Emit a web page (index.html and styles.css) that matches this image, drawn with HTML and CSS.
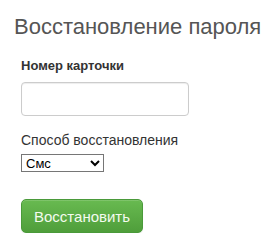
FILE: index.html
```html
<!DOCTYPE html>
<html lang="ru">
<head>
<meta charset="utf-8">
<link rel="stylesheet" href="styles.css">
</head>
<body>
<div class="page">
  <h2 class="title">Восстановление пароля</h2>
  <form class="form">
    <div class="group">
      <label class="label label-bold" for="card">Номер карточки</label>
      <input class="input" id="card" type="text">
    </div>
    <div class="group">
      <label class="label" for="method">Способ восстановления</label>
      <select class="select" id="method">
        <option>Смс</option>
        <option>Email</option>
      </select>
    </div>
    <button class="btn" type="button">Восстановить</button>
  </form>
</div>
</body>
</html>
```
FILE: styles.css
```css
html, body {
  margin: 0;
  padding: 0;
  background: #fff;
}
body {
  font-family: "Liberation Sans", Arial, sans-serif;
  color: #333;
}
.page {
  padding: 13px 0 0 14px;
}
.title {
  margin: 0;
  font-size: 22px;
  font-weight: normal;
  line-height: 28px;
  color: #555;
  white-space: nowrap;
}
.form {
  padding: 17px 0 0 7px;
}
.group {
  display: flex;
  flex-direction: column;
  align-items: flex-start;
}
.label {
  font-size: 14px;
  line-height: 16px;
  margin-bottom: 6px;
  color: #333;
}
.label-bold {
  font-size: 13px;
  font-weight: bold;
  margin-bottom: 8px;
}
.input {
  box-sizing: border-box;
  width: 168px;
  height: 34px;
  border: 1px solid #ccc;
  border-radius: 4px;
  box-shadow: inset 0 1px 1px rgba(0,0,0,0.075);
  margin: 0 0 16px 0;
  padding: 6px 12px;
  font-size: 14px;
}
.select {
  box-sizing: border-box;
  width: 83px;
  height: 18px;
  margin: 0;
  font-family: "Liberation Sans", Arial, sans-serif;
  font-size: 13px;
  border: 1px solid #767676;
  border-radius: 0;
  background: #fff;
  color: #000;
}
.btn {
  margin-top: 27px;
  box-sizing: border-box;
  width: 122px;
  height: 34px;
  padding: 0 12px;
  border: 1px solid #4a9a3a;
  border-radius: 5px;
  background: linear-gradient(to bottom, #68ba50 0%, #4f9e3b 100%);
  color: #f4fbef;
  font-family: "Liberation Sans", Arial, sans-serif;
  font-size: 15px;
  box-shadow: inset 0 1px 0 rgba(255,255,255,0.15), 0 1px 1px rgba(0,0,0,0.075);
}
```
